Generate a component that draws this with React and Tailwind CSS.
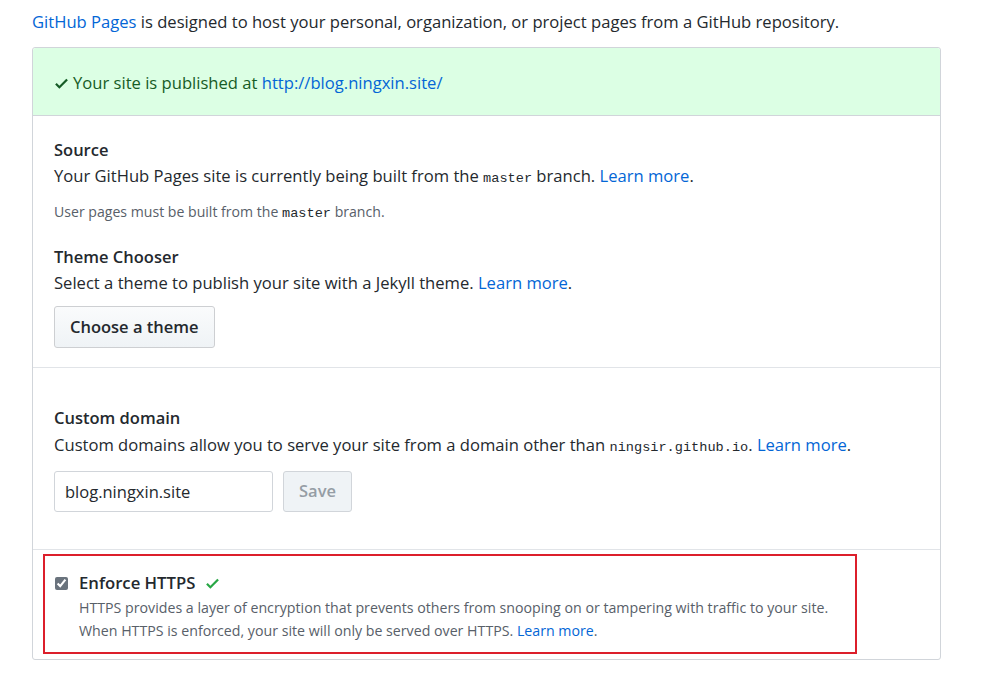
import React from 'react';

const font = { fontFamily: '"Open Sans", "Noto Sans", sans-serif' };

function Code({ children }) {
  return <code className="font-['Liberation_Mono',monospace] text-[13.6px] leading-none text-[#24292e]">{children}</code>;
}

function Link({ children }) {
  return <a href="#" className="text-[#0366d6]">{children}</a>;
}

function Check({ className }) {
  return (
    <svg viewBox="0 0 12 16" width="13" height="17" className={className} fill="currentColor">
      <path fillRule="evenodd" d="M12 5l-8 8-4-4 1.5-1.5L4 10l6.5-6.5L12 5z" />
    </svg>
  );
}

export default function App() {
  return (
    <div className="min-h-screen bg-white text-[#24292e] text-[16.6px] pl-8 pr-[58px] pt-[10px]" style={font}>
      <p className="leading-6 mb-[13px] whitespace-nowrap">
        <Link>GitHub Pages</Link> is designed to host your personal, organization, or project pages from a GitHub repository.
      </p>

      <div className="border border-[#d1d5da] rounded-[3px]">
        {/* published flash */}
        <div className="bg-[#dcffe4] border-b border-[#d1d5da] h-[68px] flex items-center pl-[22px] pt-[3px] text-[#165c26] rounded-t-[3px]">
          <Check className="text-[#165c26] mr-[5px]" />
          <span>Your site is published at <Link>http://blog.ningxin.site/</Link></span>
        </div>

        {/* source + theme */}
        <div className="px-[21px] pt-[23px] pb-[19px] border-b border-[#e1e4e8]">
          <h3 className="font-semibold text-[16.5px] leading-[22px]">Source</h3>
          <p className="leading-[26px] mt-[2px]">
            Your GitHub Pages site is currently being built from the <Code>master</Code> branch. <Link>Learn more</Link>.
          </p>
          <p className="text-[14.1px] text-[#586069] mt-[13px] leading-5">
            User pages must be built from the <Code>master</Code> branch.
          </p>

          <h3 className="font-semibold text-[16.5px] leading-[22px] mt-[24px]">Theme Chooser</h3>
          <p className="leading-[26px] mt-[2px]">
            Select a theme to publish your site with a Jekyll theme. <Link>Learn more</Link>.
          </p>
          <button className="mt-[10px] h-[42px] px-[15px] border border-[#cdcfd2] rounded-[3px] bg-gradient-to-b from-[#fafbfc] to-[#eff3f6] font-semibold text-[16.5px]">
            Choose a theme
          </button>
        </div>

        {/* custom domain */}
        <div className="px-[21px] pt-[39px] pb-[37px] border-b border-[#e1e4e8]">
          <h3 className="font-semibold text-[16.5px] leading-[22px]">Custom domain</h3>
          <p className="leading-[26px] mt-[3px]">
            Custom domains allow you to serve your site from a domain other than <Code>ningsir.github.io</Code>. <Link>Learn more</Link>.
          </p>
          <div className="flex gap-[10px] mt-[13px]">
            <input
              defaultValue="blog.ningxin.site"
              className="w-[219px] h-[41px] border border-[#d1d5da] rounded-[3px] px-[10px] text-[16.5px] text-[#24292e] outline-none"
              style={font}
            />
            <button className="h-[41px] w-[69px] border border-[#d1d5da] rounded-[3px] bg-[#eff3f6] text-[#959da5] font-semibold text-[16.5px]">
              Save
            </button>
          </div>
        </div>

        {/* enforce https */}
        <div className="pl-[10px] pt-[4px] pb-[5px]">
          <div className="w-[814px] h-[100px] border-2 border-[#dc1f2b] pl-[10px] pt-[16px]">
            <div className="flex items-start gap-[11px]">
              <input type="checkbox" defaultChecked className="mt-[5px] w-[13px] h-[13px] accent-[#6a737d]" />
              <div>
                <div className="flex items-center gap-[11px] font-semibold text-[16.7px] leading-[22px]">
                  Enforce HTTPS
                  <Check className="text-[#28a745]" />
                </div>
                <p className="text-[14.2px] text-[#586069] leading-[23px] mt-[2px]">
                  HTTPS provides a layer of encryption that prevents others from snooping on or tampering with traffic to your site.
                  <br />
                  When HTTPS is enforced, your site will only be served over HTTPS. <Link>Learn more</Link>.
                </p>
              </div>
            </div>
          </div>
        </div>
      </div>
    </div>
  );
}
